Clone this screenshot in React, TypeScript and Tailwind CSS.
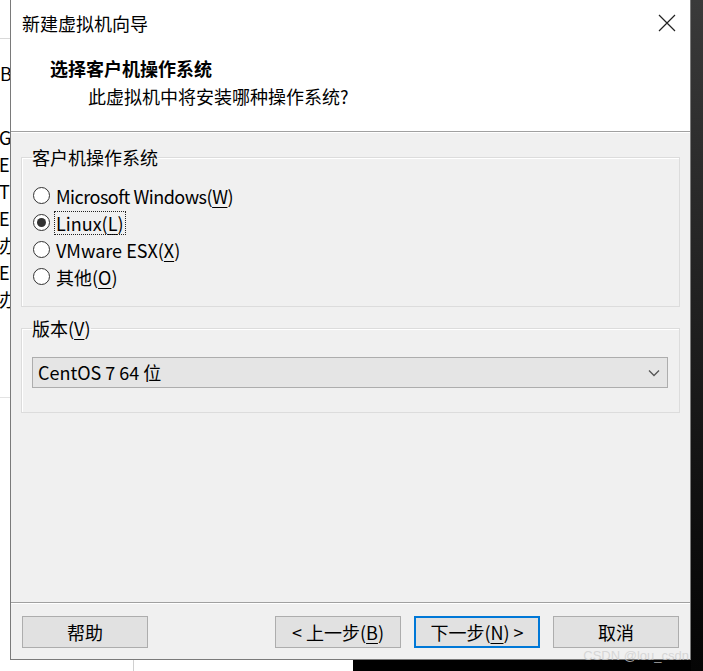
import React from "react";

const ui = "font-['Noto_Sans_CJK_SC','Noto_Sans',sans-serif]";

const Key = ({ k }: { k: string }) => (
  <span className="underline decoration-1 underline-offset-[3px]">{k}</span>
);

const Radio = ({
  checked,
  focus,
  tight,
  children,
}: {
  checked?: boolean;
  focus?: boolean;
  tight?: boolean;
  children: React.ReactNode;
}) => (
  <div className="flex h-[27px] items-center">
    <span className="flex h-[17px] w-[17px] items-center justify-center rounded-full border border-[#333] bg-white">
      {checked && <span className="h-[9px] w-[9px] rounded-full bg-[#333]" />}
    </span>
    <span
      className={`ml-[5px] px-[1px] leading-[22px] ${tight ? "tracking-[-0.5px]" : ""} ${
        focus ? "outline-1 outline-dotted outline-[#222]" : ""
      }`}
    >
      {children}
    </span>
  </div>
);

const Btn = ({
  primary,
  children,
}: {
  primary?: boolean;
  children: React.ReactNode;
}) => (
  <button
    className={`flex h-[32px] w-[126px] items-center justify-center bg-[#e1e1e1] text-[18px] text-black ${
      primary ? "border-2 border-[#0078d7]" : "border border-[#adadad]"
    }`}
  >
    {children}
  </button>
);

const BackLetters = ["G", "E", "T", "E", "办", "E", "办"];

export default function App() {
  return (
    <div
      className={`${ui} relative grid h-[671px] w-[703px] grid-cols-[10px_681px_12px] grid-rows-[660px_11px] overflow-hidden bg-white text-black`}
    >
      {/* window behind, left edge */}
      <div className="overflow-hidden bg-white text-[18px] leading-[27px]">
        <div className="mt-[38px] h-px w-full bg-[#d9d9d9]" />
        <div className="mt-[21px]">B</div>
        <div className="mt-[37px]">
          {BackLetters.map((l, i) => (
            <div key={i} className="-ml-[1px] whitespace-nowrap">
              {l}
            </div>
          ))}
        </div>
        <div className="mt-[84px] h-px w-full bg-[#e3e3e3]" />
      </div>

      {/* dialog */}
      <div className="flex flex-col border-x border-b border-[#7a7a7a] bg-[#f0f0f0]">
        <div className="flex h-[45px] items-center justify-between bg-white pl-[11px] pr-[14px] pt-[1px]">
          <span className="text-[18px]">新建虚拟机向导</span>
          <svg width="18" height="18" viewBox="0 0 18 18" className="text-[#222]">
            <path d="M1 1L17 17M17 1L1 17" stroke="currentColor" strokeWidth="1.2" />
          </svg>
        </div>
        <div className="h-[86px] bg-white pl-[39px] pt-[10px]">
          <div className="text-[18px] font-bold leading-[26px]">选择客户机操作系统</div>
          <div className="ml-[38px] mt-[2px] text-[18px] leading-[26px]">
            此虚拟机中将安装哪种操作系统?
          </div>
        </div>
        <div className="h-px bg-[#a0a0a0]" />
        <div className="h-px bg-white" />

        <div className="flex-1 px-[10px] pt-[12px]">
          <fieldset className="border border-[#dcdcdc] pb-[16px] pl-[11px] pr-[10px] pt-[13px] shadow-[inset_1px_1px_0_#fff]">
            <legend className="ml-[-1px] px-0 text-[18px] leading-[24px]">客户机操作系统</legend>
            <div className="text-[18px]">
              <Radio tight>
                Microsoft Windows(<Key k="W" />)
              </Radio>
              <Radio checked focus>
                Linux(<Key k="L" />)
              </Radio>
              <Radio>
                VMware ESX(<Key k="X" />)
              </Radio>
              <Radio>
                其他(<Key k="O" />)
              </Radio>
            </div>
          </fieldset>

          <fieldset className="mt-[9px] border border-[#dcdcdc] pb-[24px] pl-[10px] pr-[11px] pt-[17px] shadow-[inset_1px_1px_0_#fff]">
            <legend className="ml-[0px] px-0 text-[18px] leading-[24px]">
              版本(<Key k="V" />)
            </legend>
            <div className="flex h-[31px] items-center justify-between border border-[#adadad] bg-[#e5e5e5] pl-[5px] pr-[7px] text-[18px]">
              <span>CentOS 7 64 位</span>
              <svg width="12" height="8" viewBox="0 0 12 8">
                <path d="M1 1.5L6 6.5L11 1.5" fill="none" stroke="#555" strokeWidth="1.3" />
              </svg>
            </div>
          </fieldset>
        </div>

        <div className="h-px bg-[#a0a0a0]" />
        <div className="h-px bg-white" />
        <div className="flex h-[55px] items-start px-[11px] pt-[12px]">
          <Btn>帮助</Btn>
          <div className="ml-auto flex gap-[13px]">
            <Btn>
              &lt; 上一步(<Key k="B" />)
            </Btn>
            <Btn primary>
              下一步(<Key k="N" />) &gt;
            </Btn>
            <Btn>取消</Btn>
          </div>
        </div>
      </div>

      {/* right dark desktop */}
      <div className="row-span-2 bg-gradient-to-b from-[#3a3a3a] via-[#1e1e1e] to-[#050505]" />

      {/* bottom strip */}
      <div className="col-span-2 flex">
        <div className="flex w-[353px] bg-white">
          <div className="ml-[133px] w-px bg-[#d0d0d0]" />
        </div>
        <div className="flex-1 bg-black" />
      </div>

      <span className="absolute bottom-[8px] right-[14px] font-['Liberation_Sans',sans-serif] text-[13px] leading-[14px] text-[#cfcfcf]/80">
        CSDN @lou_csdn
      </span>
    </div>
  );
}
